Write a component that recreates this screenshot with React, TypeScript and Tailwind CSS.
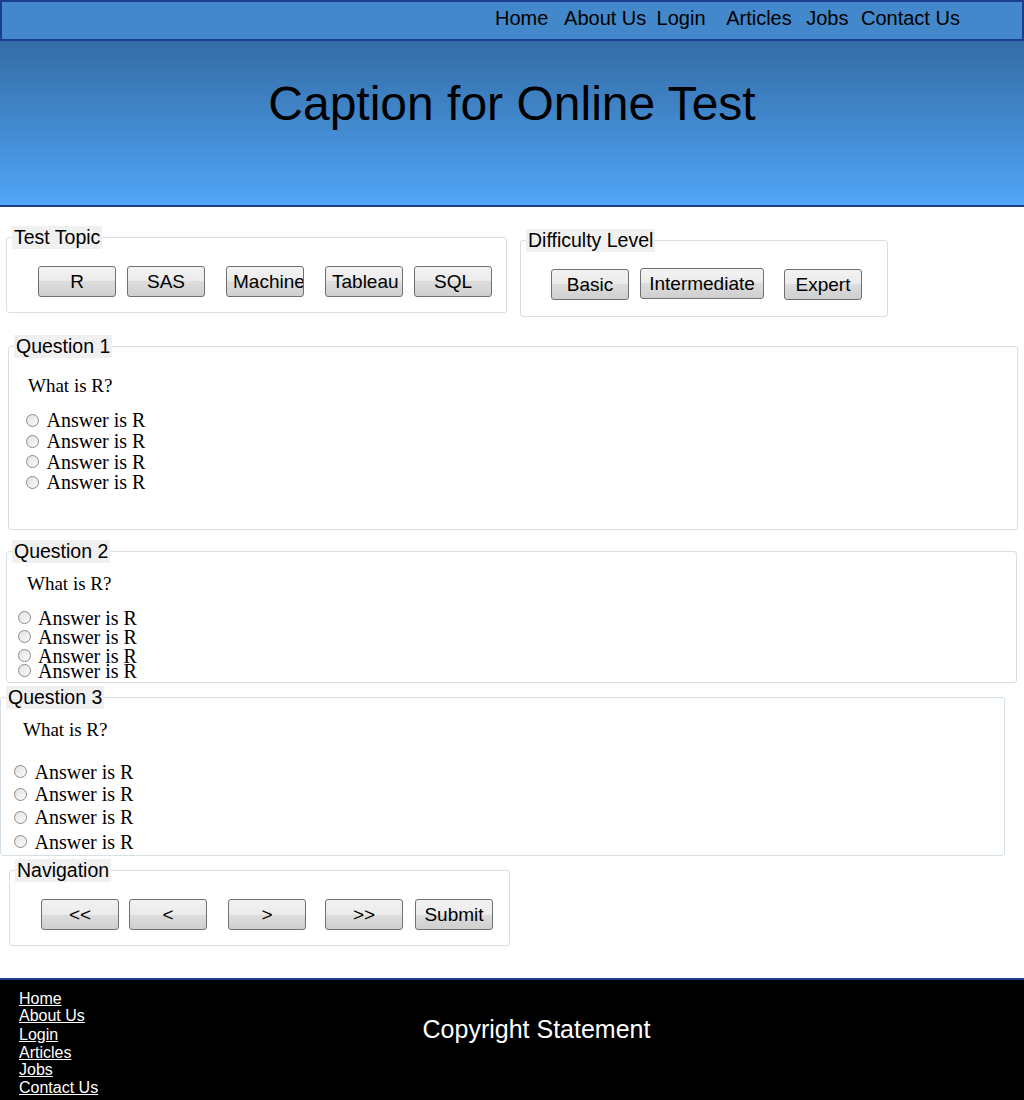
import type { ReactNode } from "react";

const sans = "font-['Liberation_Sans',Arial,sans-serif]";
const serif = "font-['Liberation_Serif','Times_New_Roman',serif]";

const navLinks = [
  { label: "Home", cls: "", foot: "" },
  { label: "About Us", cls: "ml-[15.7px]", foot: "" },
  { label: "Login", cls: "ml-[10.3px]", foot: "mt-[1px]" },
  { label: "Articles", cls: "ml-[20.6px]", foot: "" },
  { label: "Jobs", cls: "ml-[14.5px]", foot: "" },
  { label: "Contact Us", cls: "ml-[12.5px]", foot: "" },
];

const questions = [
  {
    title: "Question 1",
    box: "ml-[8px] mt-[18px] w-[1010px] pt-[17px] pb-[36px]",
    what: "ml-[14px]",
    list: "ml-[12px] mt-[14px]",
    rows: ["h-[20.7px]", "h-[20.7px]", "h-[20.7px]", "h-[20.7px]"],
    gap: "ml-[7.5px]",
  },
  {
    title: "Question 2",
    box: "ml-[6px] mt-[10px] w-[1011px] pt-[10px] pb-[5.5px]",
    what: "ml-[15px]",
    list: "ml-[6px] mt-[14.5px]",
    rows: ["h-[19px]", "h-[19px]", "h-[19px]", "h-[11px]"],
    gap: "ml-[7px]",
  },
  {
    title: "Question 3",
    box: "ml-0 mt-[3px] w-[1005px] pt-[10px] pb-0",
    what: "ml-[17px]",
    list: "ml-[8px] mt-[21px]",
    rows: ["h-[22px]", "h-[23px]", "h-[23px]", "h-[26px]"],
    gap: "ml-[7.5px]",
  },
];

function Box({ title, className, children }: { title: string; className: string; children: ReactNode }) {
  return (
    <fieldset className={`rounded-[3px] border border-[#d5dfe8] px-[5px] ${className}`}>
      <legend className={`bg-[#f0f0f0] px-[2px] text-[19.5px] leading-[23px] text-black ${sans}`}>{title}</legend>
      {children}
    </fieldset>
  );
}

function Btn({ label, className = "" }: { label: string; className?: string }) {
  return (
    <button
      type="button"
      className={`h-[31px] shrink-0 overflow-hidden whitespace-nowrap rounded-[3px] border border-[#707070] bg-[linear-gradient(#f2f2f2_0%,#ebebeb_50%,#dddddd_50%,#cfcfcf_100%)] px-[6px] text-[19px] leading-none text-black ${sans} ${className}`}
    >
      {label}
    </button>
  );
}

function Radio() {
  return (
    <span className="inline-block h-[13px] w-[13px] shrink-0 rounded-full border border-[#8e8a84] bg-gradient-to-br from-[#e2e2e2] to-[#fbfbfb]" />
  );
}

export default function App() {
  return (
    <div className="w-[1024px] bg-white">
      <div className={`flex h-[41px] items-start border-2 border-[#1d3d8f] bg-[#4288cb] pl-[493px] pt-[5px] ${sans}`}>
        {navLinks.map((l) => (
          <a key={l.label} href="#" className={`whitespace-nowrap text-[20px] leading-[23px] text-black ${l.cls}`}>
            {l.label}
          </a>
        ))}
      </div>

      <div className="h-[166px] border-b-2 border-[#1d3d8f] bg-gradient-to-b from-[#346ca5] to-[#50a6f8] pt-[36px]">
        <h1 className={`text-center text-[48px] leading-[54px] font-normal text-black ${sans}`}>Caption for Online Test</h1>
      </div>

      <div className="flex items-start">
        <Box title="Test Topic" className="ml-[6px] mt-[19px] w-[501px] pt-[17px] pb-[15px]">
          <div className="ml-[26px] flex">
            <Btn label="R" className="w-[78px]" />
            <Btn label="SAS" className="ml-[11px] w-[78px]" />
            <Btn label="Machine" className="ml-[21px] w-[78px]" />
            <Btn label="Tableau" className="ml-[21px] w-[78px]" />
            <Btn label="SQL" className="ml-[11px] w-[78px]" />
          </div>
        </Box>
        <Box title="Difficulty Level" className="ml-[13px] mt-[22px] w-[368px] pt-[16px] pb-[16px]">
          <div className="ml-[25px] flex items-start">
            <Btn label="Basic" className="mt-[1px] w-[78px]" />
            <Btn label="Intermediate" className="ml-[11px] w-[124px]" />
            <Btn label="Expert" className="ml-[20px] mt-[1px] w-[78px]" />
          </div>
        </Box>
      </div>

      {questions.map((q) => (
        <Box key={q.title} title={q.title} className={q.box}>
          <p className={`text-[19px] leading-[21px] text-black ${serif} ${q.what}`}>What is R?</p>
          <div className={q.list}>
            {q.rows.map((h, i) => (
              <div key={i} className={`flex items-center ${h}`}>
                <Radio />
                <span className={`text-[20px] leading-none whitespace-nowrap text-black ${serif} ${q.gap}`}>Answer is R</span>
              </div>
            ))}
          </div>
        </Box>
      ))}

      <Box title="Navigation" className="ml-[9px] mt-[3px] w-[501px] pt-[17px] pb-[15px]">
        <div className="ml-[26px] flex">
          <Btn label="<<" className="w-[78px]" />
          <Btn label="<" className="ml-[10px] w-[78px]" />
          <Btn label=">" className="ml-[21px] w-[78px]" />
          <Btn label=">>" className="ml-[19px] w-[78px]" />
          <Btn label="Submit" className="ml-[12px] w-[78px]" />
        </div>
      </Box>

      <footer className={`mt-[32px] flex h-[122px] border-t-2 border-[#1d3d8f] bg-black ${sans}`}>
        <ul className="w-[100px] shrink-0 pl-[19px] pt-[10px] text-[16px] leading-[17.6px]">
          {navLinks.map((l) => (
            <li key={l.label} className={l.foot}>
              <a href="#" className="whitespace-nowrap text-white underline">
                {l.label}
              </a>
            </li>
          ))}
        </ul>
        <div className="flex-1 pr-[51px] pt-[36px] text-center text-[25px] leading-[27px] text-white">Copyright Statement</div>
      </footer>
    </div>
  );
}
